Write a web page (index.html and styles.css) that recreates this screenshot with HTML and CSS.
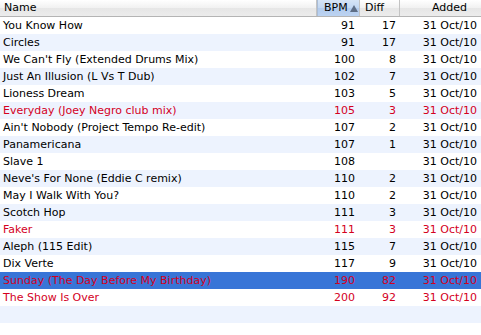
FILE: index.html
```html
<!DOCTYPE html>
<html>
<head>
<meta charset="utf-8">
<link rel="stylesheet" href="styles.css">
</head>
<body>
<div class="table">
  <div class="head">
    <div class="hc h-name">Name</div>
    <div class="hc h-bpm sorted">BPM<span class="arrow"></span></div>
    <div class="hc h-diff">Diff</div>
    <div class="hc h-added">Added</div>
  </div>
  <div class="rows">
    <div class="row"><span class="c name">You Know How</span><span class="c num bpm">91</span><span class="c num diff">17</span><span class="c added">31 Oct/10</span></div>
    <div class="row"><span class="c name">Circles</span><span class="c num bpm">91</span><span class="c num diff">17</span><span class="c added">31 Oct/10</span></div>
    <div class="row"><span class="c name">We Can't Fly (Extended Drums Mix)</span><span class="c num bpm">100</span><span class="c num diff">8</span><span class="c added">31 Oct/10</span></div>
    <div class="row"><span class="c name">Just An Illusion (L Vs T Dub)</span><span class="c num bpm">102</span><span class="c num diff">7</span><span class="c added">31 Oct/10</span></div>
    <div class="row"><span class="c name">Lioness Dream</span><span class="c num bpm">103</span><span class="c num diff">5</span><span class="c added">31 Oct/10</span></div>
    <div class="row red"><span class="c name">Everyday (Joey Negro club mix)</span><span class="c num bpm">105</span><span class="c num diff">3</span><span class="c added">31 Oct/10</span></div>
    <div class="row"><span class="c name">Ain't Nobody (Project Tempo Re-edit)</span><span class="c num bpm">107</span><span class="c num diff">2</span><span class="c added">31 Oct/10</span></div>
    <div class="row"><span class="c name">Panamericana</span><span class="c num bpm">107</span><span class="c num diff">1</span><span class="c added">31 Oct/10</span></div>
    <div class="row"><span class="c name">Slave 1</span><span class="c num bpm">108</span><span class="c num diff"></span><span class="c added">31 Oct/10</span></div>
    <div class="row"><span class="c name">Neve's For None (Eddie C remix)</span><span class="c num bpm">110</span><span class="c num diff">2</span><span class="c added">31 Oct/10</span></div>
    <div class="row"><span class="c name">May I Walk With You?</span><span class="c num bpm">110</span><span class="c num diff">2</span><span class="c added">31 Oct/10</span></div>
    <div class="row"><span class="c name">Scotch Hop</span><span class="c num bpm">111</span><span class="c num diff">3</span><span class="c added">31 Oct/10</span></div>
    <div class="row red"><span class="c name">Faker</span><span class="c num bpm">111</span><span class="c num diff">3</span><span class="c added">31 Oct/10</span></div>
    <div class="row"><span class="c name">Aleph (115 Edit)</span><span class="c num bpm">115</span><span class="c num diff">7</span><span class="c added">31 Oct/10</span></div>
    <div class="row"><span class="c name">Dix Verte</span><span class="c num bpm">117</span><span class="c num diff">9</span><span class="c added">31 Oct/10</span></div>
    <div class="row red selected"><span class="c name">Sunday (The Day Before My Birthday)</span><span class="c num bpm">190</span><span class="c num diff">82</span><span class="c added">31 Oct/10</span></div>
    <div class="row red"><span class="c name">The Show Is Over</span><span class="c num bpm">200</span><span class="c num diff">92</span><span class="c added">31 Oct/10</span></div>
    <div class="row empty"></div>
    <div class="row empty"></div>
  </div>
</div>
</body>
</html>
```
FILE: styles.css
```css
html, body {
  margin: 0;
  padding: 0;
  background: #ffffff;
}
body {
  font-family: "DejaVu Sans", "Lucida Grande", sans-serif;
  font-size: 11px;
  color: #000;
  width: 481px;
  height: 335px;
  overflow: hidden;
}
.table {
  width: 481px;
}
.head {
  display: grid;
  grid-template-columns: 317px 43px 40px 81px;
  height: 16px;
  border-bottom: 1px solid #b4b4b4;
  background: linear-gradient(#ffffff, #f1f1f1 50%, #e6e6e6 51%, #ececec);
}
.hc {
  display: flex;
  align-items: center;
  line-height: 16px;
  border-right: 1px solid #c3c3c3;
  box-sizing: border-box;
  overflow: hidden;
  white-space: nowrap;
}
.hc:last-child {
  border-right: none;
}
.h-name {
  padding-left: 4px;
}
.h-bpm {
  padding-left: 6px;
  background: linear-gradient(#d6e4f6, #c2d7f2 50%, #b2cbed 51%, #bcd3f1);
  border-left: 1px solid #a9bcd6;
}
.arrow {
  display: inline-block;
  width: 0;
  height: 0;
  margin-left: 2px;
  border-left: 4px solid transparent;
  border-right: 4px solid transparent;
  border-bottom: 7px solid #5e6e86;
}
.h-diff {
  padding-left: 5px;
}
.h-added {
  padding-left: 32px;
}
.row {
  display: grid;
  grid-template-columns: 317px 43px 40px 81px;
  height: 17px;
  line-height: 17px;
  background: #ffffff;
  white-space: nowrap;
}
.rows .row:nth-child(even) {
  background: #edf3fe;
}
.row.selected,
.rows .row.selected:nth-child(even) {
  background: #3875d7;
}
.row.red {
  color: #d4001e;
}
.c {
  overflow: hidden;
}
.name {
  padding-left: 3px;
}
.num {
  text-align: right;
}
.bpm {
  padding-right: 5px;
}
.diff {
  padding-right: 4px;
}
.added {
  text-align: right;
  padding-right: 4px;
}
```
